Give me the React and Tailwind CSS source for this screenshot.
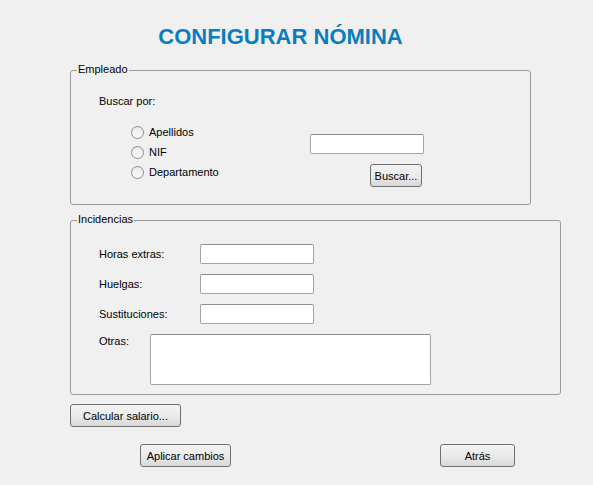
import React from "react";

const btnClass =
  "h-[23px] border border-[#707070] rounded-[3px] bg-gradient-to-b from-[#f3f3f3] via-[#ebebeb] to-[#d8d8d8] text-[11px] leading-[14px] text-black flex items-center justify-center";
const inputClass =
  "w-[114px] h-[20px] border border-[#a3a3a3] border-t-[#8e8e8e] rounded-[2px] bg-white";

const GroupBox = ({ title, className, children }) => (
  <div
    className={
      "relative border border-[#9a9a9a] rounded-[3px] " + (className || "")
    }
  >
    <span className="absolute left-[6px] top-[-9px] px-[1px] bg-[#f0f0f0] leading-[14px]">
      {title}
    </span>
    {children}
  </div>
);

const Radio = ({ label }) => (
  <div className="h-[20px] flex items-center">
    <span className="w-[13px] h-[13px] rounded-full border border-[#8c8c8c] bg-gradient-to-b from-[#e8e8e8] to-[#fbfbfb] shrink-0"></span>
    <span className="ml-[5px]">{label}</span>
  </div>
);

export default function App() {
  return (
    <div
      className="w-[593px] h-[485px] bg-[#f0f0f0] text-[11px] leading-[14px] text-black overflow-hidden"
      style={{ fontFamily: '"Liberation Sans", Arial, sans-serif' }}
    >
      <div className="w-[561px] pt-[24px] text-center text-[22px] leading-[26px] font-bold text-[#0b7dbf]">
        CONFIGURAR NÓMINA
      </div>

      <GroupBox title="Empleado" className="mt-[20px] ml-[70px] w-[461px] h-[135px]">
        <div className="pl-[28px] pt-[23px]">
          <div>Buscar por:</div>
          <div className="flex mt-[14px]">
            <div className="w-[179px] ml-[32px] flex flex-col">
              <Radio label="Apellidos" />
              <Radio label="NIF" />
              <Radio label="Departamento" />
            </div>
            <div className="flex flex-col items-end mt-[12px]">
              <div className={inputClass}></div>
              <button className={btnClass + " mt-[10px] mr-[2px] w-[52px] h-[20px]"}>
                Buscar...
              </button>
            </div>
          </div>
        </div>
      </GroupBox>

      <GroupBox title="Incidencias" className="mt-[15px] ml-[70px] w-[491px] h-[175px]">
        <div className="pl-[28px] pt-[23px] flex flex-col gap-[10px]">
          <div className="flex items-center h-[20px]">
            <span className="w-[101px]">Horas extras:</span>
            <div className={inputClass}></div>
          </div>
          <div className="flex items-center h-[20px]">
            <span className="w-[101px]">Huelgas:</span>
            <div className={inputClass}></div>
          </div>
          <div className="flex items-center h-[20px]">
            <span className="w-[101px]">Sustituciones:</span>
            <div className={inputClass}></div>
          </div>
          <div className="flex items-start">
            <span className="w-[51px]">Otras:</span>
            <div className="w-[281px] h-[51px] border border-[#a3a3a3] border-t-[#8e8e8e] rounded-[2px] bg-white"></div>
          </div>
        </div>
      </GroupBox>

      <div className="ml-[70px] mt-[9px]">
        <button className={btnClass + " w-[111px]"}>Calcular salario...</button>
      </div>

      <div className="flex mt-[17px] ml-[140px]">
        <button className={btnClass + " w-[91px]"}>Aplicar cambios</button>
        <button className={btnClass + " w-[75px] ml-[209px]"}>Atrás</button>
      </div>
    </div>
  );
}
